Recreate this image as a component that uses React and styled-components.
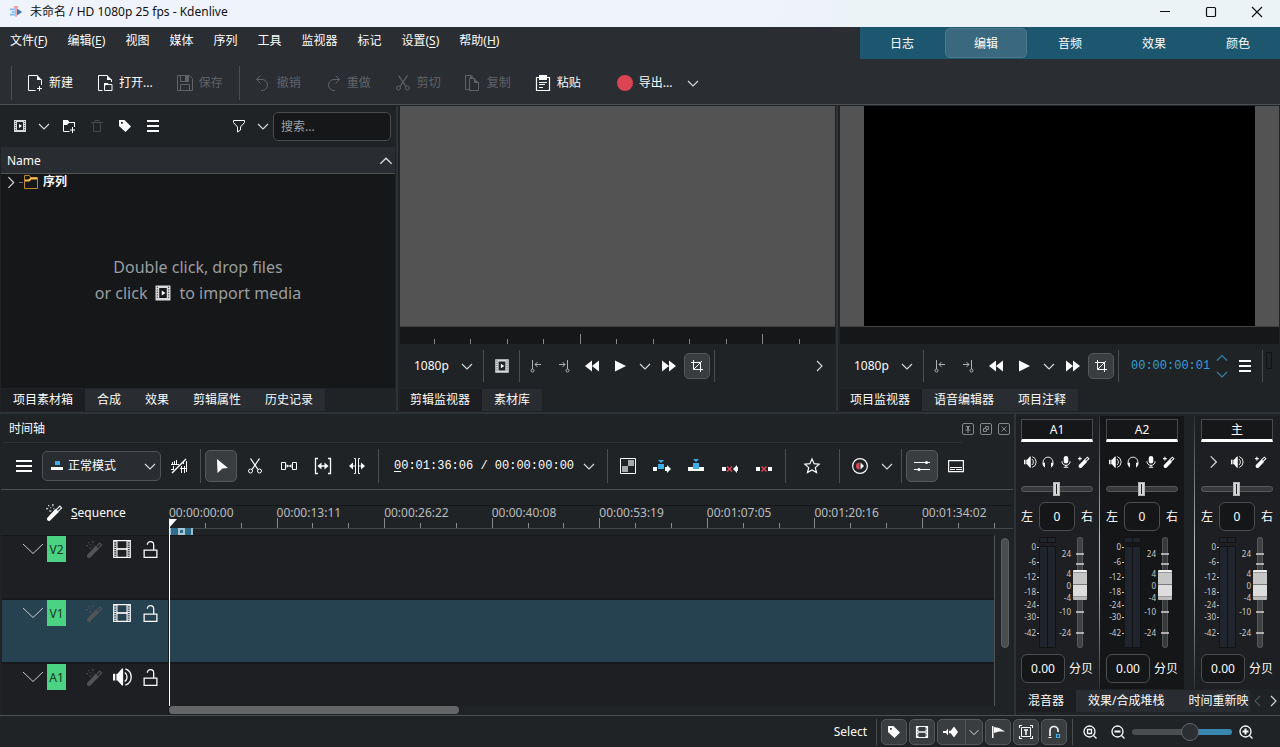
import styled, { createGlobalStyle, css } from "styled-components";

const GlobalStyle = createGlobalStyle`
  * { box-sizing: border-box; }
  body {
    margin: 0;
    background: #202326;
    color: #fcfcfc;
    font: 12px/16px "Noto Sans", "Noto Sans CJK SC", sans-serif;
  }
  button, input, select {
    font: inherit;
    color: inherit;
    border: none;
    background: none;
    padding: 0;
    margin: 0;
    outline: none;
  }
  svg { display: block; flex: none; }
`;

const line = { fill: "none", stroke: "currentColor" };
const solid = { fill: "currentColor" };
const thin = { fill: "none", stroke: "currentColor", strokeOpacity: 0.85, strokeWidth: 1.1 };

const shapes = {
  logo: (
    <>
      <path d="M1 5h6M3 8h4M1 11h6" stroke="#7fbcf2" strokeWidth="2" fill="none" />
      <path d="M9 4l6 4-6 4z" fill="#3f74ad" />
      <path d="M5.500 1h5v2L9 4.500v9H7v-9L5.500 3z" fill="#f0a3a0" />
    </>
  ),
  newDoc: (
    <>
      <path {...line} d="M8.500 15.500h-7V.5h9M14.500 4.500V10" />
      <path {...solid} d="M10 0l5 5h-5z" />
      <path {...line} d="M12.500 11v5M10 13.500h5" />
    </>
  ),
  openDoc: (
    <>
      <path {...line} d="M5.500 15.500h-4V.5h9M14.500 4.500V7" />
      <path {...solid} d="M10 0l5 5h-5z" />
      <path {...line} d="M7.500 15.500v-7h3l1 1h3.500v6z" />
      <path {...solid} d="M7 8h4l1 2H9l-2 2z" />
    </>
  ),
  save: (
    <>
      <path {...line} d="M.5.5h12l3 3v12H.5zM3.500.5v6h8v-6M3.500 15.500v-6h9v6" />
      <path {...solid} d="M8 1h3v5H8z" />
    </>
  ),
  undo: <path {...line} d="M5.500.5l-4 4 4 4M1.500 4.500H7a5.500 5.500 0 0 1 0 11H6" />,
  redo: <path {...line} d="M10.500.5l4 4-4 4M14.500 4.500H9a5.500 5.500 0 0 0 0 11h1" />,
  cut: (
    <>
      <path {...line} d="M3.500.5L11 11.500M12.500.5L5 11.500" strokeWidth="1.3" />
      <circle {...line} cx="3.500" cy="13" r="2" />
      <circle {...line} cx="12.500" cy="13" r="2" />
    </>
  ),
  copy: (
    <>
      <path {...line} d="M4.500 14.500h-4V.5h6l2 2" />
      <path {...line} d="M4.500 3.500h5M13.500 7v8.500h-9v-12" />
      <path {...solid} d="M9 3l5 5H9zM5 0l3 3H5z" />
    </>
  ),
  paste: (
    <>
      <path {...line} d="M1.500 2.500h13v13h-13z" strokeWidth="1.2" />
      <path {...solid} d="M4 0h8v5H4z" />
      <path {...line} d="M4 7.500h8M4 9.500h6M4 12.500h4" />
    </>
  ),
  record: <circle cx="8" cy="8" r="8" fill="#da4453" />,
  down: <path {...thin} d="M3 6l5 5 5-5" />,
  up: <path {...thin} d="M3 10.500l5-5 5 5" />,
  right: <path {...thin} d="M6 3l5 5-5 5" />,
  left: <path {...thin} d="M10 3L5 8l5 5" />,
  clip: (
    <>
      <path fill="#d8dadb" fillRule="evenodd" d="M2 2h12v12H2zM5 4v8h6V4z" />
      <path stroke="#55585b" strokeDasharray="1 1" d="M3.500 3v10M12.500 3v10" />
      <path {...solid} d="M7 6l3 2-3 2z" />
    </>
  ),
  addFolder: (
    <>
      <path {...line} d="M8.500 13.500h-6v-11h4l1.500 2h5.500V9" />
      <path {...solid} d="M2 2h5l1 2h6v1H8L6 7H2z" />
      <path {...line} d="M11.500 9v6M9 12h5" />
    </>
  ),
  trash: <path {...line} d="M2 4.500h12M6 4V2.500h4V4M4.500 5v8.500h7V5" />,
  tag: <path {...solid} fillRule="evenodd" d="M2 2h5.500L14 8.500 8.500 14 2 8zM4 4v1.800h1.800V4z" />,
  menu: <path {...line} d="M2 3h12M2 8h12M2 13h12" strokeWidth="2" />,
  bigMenu: <path {...line} d="M0 3h16M0 8h16M0 13h16" strokeWidth="2" />,
  filter: <path {...line} d="M2.500 2.500h11v2L9.500 9v3l-3 2V9l-4-4.500z" />,
  folder: (
    <g fill="none" stroke="#c08429">
      <path d="M1.500 1.500h5l1 2h7v11h-13z" />
      <path d="M2 6.500h4l2-2h6" stroke="#fdbc4b" strokeWidth="2" />
    </g>
  ),
  markIn: (
    <g {...line}>
      <path d="M4.500 2v9M7 6.500h6M9.500 4L7 6.500 9.500 9" />
      <circle cx="4.500" cy="12.500" r="1.500" />
    </g>
  ),
  markOut: (
    <g {...line}>
      <path d="M11.500 2v9M3 6.500h6M6.500 4L9 6.500 6.500 9" />
      <circle cx="11.500" cy="12.500" r="1.500" />
    </g>
  ),
  rewind: <path {...solid} d="M8 2.500v11L1 8zM15 2.500v11L8 8z" />,
  forward: <path {...solid} d="M8 2.500v11L15 8zM1 2.500v11L8 8z" />,
  play: <path {...solid} d="M3 2.500l11 5.500-11 5.500z" />,
  crop: <path {...line} d="M4.500 2v9.500H14M2 4.500h9.500V14M4.500 11.500L13 3" />,
  pin: (
    <g {...line}>
      <rect x="2.500" y="2.500" width="11" height="11" rx="1.500" />
      <path d="M6 5.500h4M5.500 9h5M8 9v3" />
      <path d="M8 5v4" strokeWidth="2" />
    </g>
  ),
  float: (
    <g {...line}>
      <rect x="2.500" y="2.500" width="11" height="11" rx="1.500" />
      <path d="M5.500 7.500h3v3h-3zM7.500 7V5.500h3v3H9" />
    </g>
  ),
  closeDock: (
    <g {...line}>
      <rect x="2.500" y="2.500" width="11" height="11" rx="1.500" />
      <path d="M5.500 5.500l5 5M10.500 5.500l-5 5" />
    </g>
  ),
  normalMode: (
    <>
      <path {...solid} d="M2 9h12v3H2z" />
      <path fill="#3daee9" d="M6 3h5v4H6z" />
    </>
  ),
  waves: (
    <g {...line}>
      <path d="M0 6.500h8M1.500 4v2M3.500 3v3M5.500 2v4M0 11.500h2M9 10.500h6M10.500 8v7M13.500 8v7" />
      <path d="M1 15L15 1" strokeWidth="1.500" />
      <path d="M2.500 8v4M12.500 3v3M15.500 3v11" />
    </g>
  ),
  pointer: <path {...solid} d="M4 1l11 9-5.500.5L4.500 15z" />,
  spacer: (
    <g {...line}>
      <path d="M.5 4.500h4v7h-4zM11.500 4.500h4v7h-4zM6 8h4" />
      <path {...solid} stroke="none" d="M5.500 6v4l2-2zM10.500 6v4l-2-2z" />
    </g>
  ),
  slip: (
    <g {...line}>
      <path d="M3 .5H.5v15H3M13 .5h2.500v15H13M4 8h8" strokeWidth="1.300" />
      <path {...solid} stroke="none" d="M6.500 4.500v7L2.500 8zM9.500 4.500v7l4-3.500z" />
    </g>
  ),
  slide: (
    <g {...line}>
      <path d="M5 .5h1.500v15H5M11 .5H9.500v15H11M2 8h4M10 8h4" />
      <path {...solid} stroke="none" d="M4 4.500v7L0 8zM12 4.500v7L16 8z" />
    </g>
  ),
  composite: (
    <>
      <path {...line} d="M.5.5h15v15H.5z" />
      <path fill="#a5a8aa" d="M8 2h6v6H8zM2 8h6v6H2z" />
    </>
  ),
  insert: (
    <>
      <path {...solid} d="M-1 9h4v4h-4zM11 9h2V7l4 4-4 4v-2h-2z" />
      <path fill="#3daee9" d="M4 6h6v5H4zM4 2h6L7 5z" />
    </>
  ),
  overwrite: (
    <>
      <path {...solid} d="M0 9h16v4H0z" />
      <path fill="#3daee9" d="M5 5h6v6H5zM5 1h6L8 4z" />
    </>
  ),
  extract: (
    <>
      <path {...solid} d="M0 9h4v4H0zM16 9h-1V7l-4 4 4 4v-2h1z" />
      <path stroke="#da4453" strokeWidth="1.500" d="M5 8.500l5 5M10 8.500l-5 5" />
    </>
  ),
  lift: (
    <>
      <path {...solid} d="M0 9h4v4H0zM12 9h4v4h-4z" />
      <path stroke="#da4453" strokeWidth="1.500" d="M5.500 8.500l5 5M10.500 8.500l-5 5" />
    </>
  ),
  star: <path {...line} d="M8 1l2.100 4.700 5 .5-3.800 3.400 1.200 5L8 12l-4.500 2.600 1.200-5L.9 6.200l5-.5z" strokeWidth="1.2" />,
  preview: (
    <>
      <circle {...line} cx="8" cy="8" r="7.400" strokeWidth="1.2" />
      <path fill="#da4453" d="M7.500 4.500v7a3.500 3.500 0 0 1 0-7z" />
      <path {...solid} d="M8.500 4.500v7l3.500-3.500z" />
    </>
  ),
  sliders: (
    <>
      <path {...line} d="M0 4.500h16M0 11.500h16" strokeWidth="1.2" />
      <circle {...solid} cx="12.500" cy="4.500" r="1.600" />
      <circle {...solid} cx="5" cy="11.500" r="1.600" />
    </>
  ),
  subtitle: (
    <g {...line}>
      <path d="M.6 2.600h14.800v11H.6z" strokeWidth="1.2" />
      <path d="M2 9.500h12M2 11.500h5M8 11.500h6" />
    </g>
  ),
  wand: (
    <>
      <path {...line} d="M9.500 5.500l3.500-3.500 1.700 1.700-3.500 3.500z" />
      <path {...solid} d="M8.800 4.700l3 3L4 15.500a1.500 1.500 0 0 1-2.500-2.800z" />
      <path {...solid} d="M2 1h1v1H2zM6 0h1v2H6zM0 4h2v1H0zM4 3h1v1H4zM3 6h2v1H3zM7 4h1v1H7z" />
    </>
  ),
  smallWand: (
    <>
      <path {...line} d="M8.500 5.500l4-4 2 2-4 4z" strokeWidth="1.400" />
      <path {...solid} d="M8.500 4.500l3.500 3.500L5 15.200a2 2 0 0 1-3.500-3.500z" />
      <path {...line} d="M0 3.500h5M2.500 1v5" strokeWidth="1.400" />
    </>
  ),
  film: (
    <>
      <path {...line} d="M.6.6h14.800v14.800H.6zM3.500 1v14M12.500 1v14" />
      <path {...line} d="M3 8h10" strokeWidth="1.500" />
      <path stroke="currentColor" strokeWidth="2" strokeDasharray="1 1" d="M2 1v14M14 1v14" />
    </>
  ),
  lock: <path {...line} d="M2 8.500h12v7H2zM5 3.500a3 3 0 0 1 6 0V8" strokeWidth="1.2" />,
  speaker: (
    <>
      <path {...solid} d="M0 5h2v6H0zM3 5h1l4-4.500h1v15H8L4 11H3z" />
      <path {...line} d="M10.500 4a5 5 0 0 1 0 8M11 .8a7.600 7.600 0 0 1 0 14.400" strokeWidth="1.2" />
    </>
  ),
  phones: (
    <>
      <path {...line} d="M1.500 11V8a6.500 6.500 0 0 1 13 0v3" strokeWidth="1.2" />
      <path {...solid} d="M1 9h3v6H3L1 12zM15 9h-3v6h1l2-3z" />
    </>
  ),
  mic: (
    <>
      <rect {...solid} x="5" y="0" width="6" height="10" rx="3" />
      <path {...line} d="M2.500 7a5.500 5.500 0 0 0 11 0M8 12v3M5 15h6" strokeWidth="1.3" />
    </>
  ),
  flag: <path {...solid} d="M2 2h1.500v12H2zM4 3l5 1 6 3.500H9L4 9z" />,
  strip: (
    <>
      <path {...line} d="M2.500 2.500h11v11h-11z" strokeWidth="1.2" />
      <path stroke="currentColor" strokeWidth="2" strokeDasharray="2 1" d="M3.500 2.500v11M12.500 2.500v11" />
      <path {...line} d="M4 8h8" strokeWidth="1.500" />
    </>
  ),
  audio: <path {...solid} d="M0 7h3l2-2.500v7L3 9H0zM6 6.500L7.500 7 11 2.500 15 8l-4 5.500L7.500 9 6 9.500z" />,
  zone: (
    <g {...line}>
      <path d="M3.500 3.500h9v9h-9zM1.500 1v3M1 1.500h3M14.500 1v3M15 1.500h-3M1.500 15v-3M1 14.500h3M14.500 15v-3M15 14.500h-3" />
      <path d="M6 6h4M8 6v5" strokeWidth="1.500" />
    </g>
  ),
  magnet: (
    <>
      <path {...line} d="M4 12V6.500a4 4 0 0 1 8 0V8" strokeWidth="1.600" />
      <path {...line} d="M2.500 13.500h3" />
      <path fill="none" stroke="#3daee9" strokeWidth="1.200" d="M10.500 10.500h3v3h-3z" />
    </>
  ),
  zoomFit: (
    <g {...line} strokeWidth="1.300">
      <circle cx="7.500" cy="7.500" r="5.500" />
      <path d="M11.500 11.500l3 3M5.500 5.500h4v4h-4z" />
    </g>
  ),
  zoomOut: (
    <g {...line} strokeWidth="1.300">
      <circle cx="7.500" cy="7.500" r="5.500" />
      <path d="M11.500 11.500l3 3" />
      <path d="M4.500 7.500h6" strokeWidth="2" />
    </g>
  ),
  zoomIn: (
    <g {...line} strokeWidth="1.300">
      <circle cx="7.500" cy="7.500" r="5.500" />
      <path d="M11.500 11.500l3 3" />
      <path d="M4.500 7.500h6M7.500 4.500v6" strokeWidth="2" />
    </g>
  ),
  minimize: <path {...line} d="M3 7.500h10" />,
  maximize: <rect {...line} x="3.500" y="3.500" width="9" height="9" rx="1" strokeWidth="1.200" />,
  close: <path {...line} d="M3 3l10 10M13 3L3 13" strokeWidth="1.200" />,
};

function Icon({ name, size = 16 }) {
  return (
    <svg width={size} height={size} viewBox="0 0 16 16" aria-hidden="true" overflow="visible">
      {shapes[name]}
    </svg>
  );
}

export default function App() {
  return (
    <Window>
      <GlobalStyle />
      <TitleBar>
        <Icon name="logo" size={14} />
        <Title>未命名 / HD 1080p 25 fps - Kdenlive</Title>
        {["minimize", "maximize", "close"].map((n) => (
          <WindowButton key={n} aria-label={n}>
            <Icon name={n} />
          </WindowButton>
        ))}
      </TitleBar>
      <Header />
      <Docks>
        <ProjectBin />
        <ClipMonitor />
        <ProjectMonitor />
      </Docks>
      <Lower>
        <Timeline />
        <Mixer />
      </Lower>
      <StatusBar />
    </Window>
  );
}

function Header() {
  const menus = [["文件", "F"], ["编辑", "E"], ["视图"], ["媒体"], ["序列"], ["工具"], ["监视器"], ["标记"], ["设置", "S"], ["帮助", "H"]];
  return (
    <HeaderBox>
      <MenuRow>
        <Menus>
          {menus.map(([label, key]) => (
            <MenuItem key={label}>
              {label}
              {key && <>(<u>{key}</u>)</>}
            </MenuItem>
          ))}
        </Menus>
        <Layouts>
          {["日志", "编辑", "音频", "效果", "颜色"].map((l) => (
            <LayoutButton key={l} $active={l === "编辑"}>{l}</LayoutButton>
          ))}
        </Layouts>
      </MenuRow>
      <MainTools>
        <Sep />
        <TextTool icon="newDoc">新建</TextTool>
        <TextTool icon="openDoc">打开...</TextTool>
        <TextTool icon="save" disabled>保存</TextTool>
        <Sep />
        <TextTool icon="undo" disabled>撤销</TextTool>
        <TextTool icon="redo" disabled>重做</TextTool>
        <TextTool icon="cut" disabled>剪切</TextTool>
        <TextTool icon="copy" disabled>复制</TextTool>
        <TextTool icon="paste">粘贴</TextTool>
        <ExportGroup>
          <TextTool icon="record">导出...</TextTool>
          <Tool icon="down" w={18} />
        </ExportGroup>
      </MainTools>
    </HeaderBox>
  );
}

function TextTool({ icon, disabled, children }) {
  return (
    <TextButton disabled={disabled}>
      <Icon name={icon} />
      {children}
    </TextButton>
  );
}

function Tool({ icon, w, size, ...rest }) {
  return (
    <Slot $w={w} aria-label={icon} {...rest}>
      <Icon name={icon} size={size} />
    </Slot>
  );
}

function Tabs({ items, flush }) {
  return (
    <TabRow $flush={flush}>
      {items.map((t, i) => (
        <Tab key={t} $active={i === 0}>{t}</Tab>
      ))}
    </TabRow>
  );
}

function ProjectBin() {
  return (
    <BinDock>
      <BinTools>
        <Tool icon="clip" w={26} />
        <Tool icon="down" w={22} />
        <Tool icon="addFolder" w={28} />
        <Tool icon="trash" w={28} disabled />
        <Tool icon="tag" w={28} />
        <Tool icon="menu" w={28} />
        <Grow />
        <Tool icon="filter" w={28} />
        <Tool icon="down" w={20} />
        <Search type="search" placeholder="搜索..." aria-label="搜索" />
      </BinTools>
      <BinHeader>
        Name
        <Icon name="up" size={18} />
      </BinHeader>
      <BinList>
        <TreeRow>
          <Icon name="right" size={17} />
          <Dash />
          <Icon name="folder" />
          <b>序列</b>
        </TreeRow>
        <Hint>
          <span>Double click, drop files</span>
          <span>or click <Icon name="clip" size={20} /> to import media</span>
        </Hint>
      </BinList>
      <Tabs items={["项目素材箱", "合成", "效果", "剪辑属性", "历史记录"]} />
    </BinDock>
  );
}

function MonitorTools({ clip, children }) {
  return (
    <MonitorBar>
      <Quality>
        <select aria-label="quality" defaultValue="1080p">
          <option>1080p</option>
        </select>
        <Icon name="down" />
      </Quality>
      <MonitorSep />
      {clip && (
        <>
          <Tool icon="clip" w={31} size={18} />
          <MonitorSep />
        </>
      )}
      <DimTool icon="markIn" w={28} />
      <DimTool icon="markOut" w={28} />
      <Tool icon="rewind" w={28} />
      <Tool icon="play" w={28} />
      <Tool icon="down" w={22} />
      <Tool icon="forward" w={26} />
      <MonitorToggle $w={26} aria-label="crop">
        <Icon name="crop" />
      </MonitorToggle>
      <MonitorSep />
      {children}
    </MonitorBar>
  );
}

function ClipMonitor() {
  return (
    <MonitorDock>
      <Video />
      <ClipRuler>
        {Array.from({ length: 11 }, (_, i) => (
          <Tick key={i} $major={i === 4 || i === 9} />
        ))}
      </ClipRuler>
      <MonitorTools clip>
        <Grow />
        <Tool icon="right" w={32} />
      </MonitorTools>
      <Tabs items={["剪辑监视器", "素材库"]} flush />
    </MonitorDock>
  );
}

function ProjectMonitor() {
  return (
    <MonitorDock $last>
      <Video>
        <Frame />
      </Video>
      <ClipRuler />
      <MonitorTools>
        <Position aria-label="position" defaultValue="00:00:00:01" />
        <Spin>
          <Icon name="up" />
          <Icon name="down" />
        </Spin>
        <Tool icon="menu" w={30} />
        <MonitorSep />
        <MiniMeter />
      </MonitorTools>
      <Tabs items={["项目监视器", "语音编辑器", "项目注释"]} flush />
    </MonitorDock>
  );
}

const times = ["00:00:00:00", "00:00:13:11", "00:00:26:22", "00:00:40:08", "00:00:53:19", "00:01:07:05", "00:01:20:16", "00:01:34:02"];
const tracks = [
  { id: "V2", icon: "film" },
  { id: "V1", icon: "film", active: true },
  { id: "A1", icon: "speaker" },
];

function Timeline() {
  return (
    <TimelineDock>
      <DockTitle>
        时间轴
        <Grow />
        <DockButton aria-label="pin"><Icon name="pin" /></DockButton>
        <DockButton aria-label="float"><Icon name="float" /></DockButton>
        <DockButton aria-label="close"><Icon name="closeDock" /></DockButton>
      </DockTitle>
      <TitleRule />
      <TimelineTools>
        <Tool icon="bigMenu" />
        <ModeBox>
          <Icon name="normalMode" />
          <select aria-label="mode" defaultValue="正常模式">
            <option>正常模式</option>
          </select>
          <Icon name="down" />
        </ModeBox>
        <Tool icon="waves" />
        <Sep />
        <Toggle $w={32} aria-label="pointer"><Icon name="pointer" /></Toggle>
        <Tool icon="cut" />
        <Tool icon="spacer" />
        <Tool icon="slip" />
        <Tool icon="slide" />
        <Sep />
        <TimeButton>
          <span><u>0</u>0:01:36:06 / 00:00:00:00</span>
          <Icon name="down" />
        </TimeButton>
        <Sep />
        <Tool icon="composite" />
        <Tool icon="insert" />
        <Tool icon="overwrite" />
        <Tool icon="extract" />
        <Tool icon="lift" />
        <Sep />
        <Tool icon="star" w={46} />
        <Sep />
        <Tool icon="preview" />
        <Tool icon="down" w={20} />
        <Sep />
        <Toggle $w={32} aria-label="mixer"><Icon name="sliders" /></Toggle>
        <Tool icon="subtitle" />
      </TimelineTools>
      <TimelineBody>
        <Heads>
          <SequenceRow>
            <Icon name="wand" size={17} />
            <span><u>S</u>equence</span>
          </SequenceRow>
          {tracks.map((t) => (
            <TrackHead key={t.id} $active={t.active}>
              <svg width="20" height="10" viewBox="0 0 20 10" fill="none" stroke="#c8cacb" aria-hidden="true">
                <path d="M0 0l10 9.500L20 0" />
              </svg>
              <Badge>{t.id}</Badge>
              <HeadButton aria-label="effects" disabled><Icon name="wand" size={17} /></HeadButton>
              <HeadButton aria-label={t.icon}><Icon name={t.icon} size={18} /></HeadButton>
              <HeadButton aria-label="lock"><Icon name="lock" size={17} /></HeadButton>
            </TrackHead>
          ))}
        </Heads>
        <TrackArea>
          <Labels>
            {times.map((t) => <span key={t}>{t}</span>)}
          </Labels>
          <Ticks>
            {Array.from({ length: 24 }, (_, i) => (
              <Tick key={i} $major={i % 3 === 0} />
            ))}
          </Ticks>
          <ZoneRow>
            <Zone><i /></Zone>
          </ZoneRow>
          <LaneRow>
            <Lanes>
              {tracks.map((t) => <Lane key={t.id} $active={t.active} />)}
            </Lanes>
            <ScrollRail><ScrollThumb /></ScrollRail>
          </LaneRow>
          <HorizontalThumb />
          <Playhead />
        </TrackArea>
      </TimelineBody>
    </TimelineDock>
  );
}

const levels = [["0", 12], ["-6", 27], ["-12", 42], ["-18", 57], ["-24", 70], ["-30", 82], ["-42", 98]];
const gains = [["24", 19], ["4", 39], ["0", 51], ["-4", 63], ["-10", 77], ["-24", 98]];

function Meter() {
  return (
    <svg width="52" height="114" viewBox="0 0 52 114" aria-hidden="true">
      <g fill="#20242c" stroke="#111315">
        <path d="M18.500 2.500h8v5h-8zM26.500 2.500h8v5h-8zM18.500 11.500h8v101h-8zM26.500 11.500h8v101h-8z" />
      </g>
      <g fill="#c9cbcc" fontSize="8" textAnchor="end">
        {levels.map(([l, y]) => (
          <g key={l}>
            <text x="15" y={y + 3}>{l}</text>
            <path d={`M16 ${y}h2v1h-2z`} />
          </g>
        ))}
        {gains.map(([l, y]) => (
          <text key={l} x="50" y={y + 3}>{l}</text>
        ))}
      </g>
    </svg>
  );
}

function Strip({ name, variant, icons }) {
  return (
    <StripBox $variant={variant}>
      <StripName>{name}</StripName>
      <StripIcons>
        {icons.map((n) => (
          <button key={n} aria-label={n}><Icon name={n} size={n === "right" ? 18 : 12} /></button>
        ))}
      </StripIcons>
      <Balance type="range" min="-50" max="50" defaultValue="-1" aria-label={`${name} balance`} />
      <StripRow>
        左
        <NumberBox $w={36} defaultValue="0" aria-label={`${name} balance value`} />
        右
      </StripRow>
      <MeterRow>
        <Meter />
        <Fader type="range" min="0" max="100" defaultValue="59" aria-label={`${name} volume`} />
      </MeterRow>
      <StripRow>
        <NumberBox $w={44} defaultValue="0.00" aria-label={`${name} gain`} />
        分贝
      </StripRow>
    </StripBox>
  );
}

function Mixer() {
  return (
    <MixerDock>
      <Strips>
        <Strip name="A1" icons={["speaker", "phones", "mic", "smallWand"]} />
        <StripLine />
        <Strip name="A2" variant="dark" icons={["speaker", "phones", "mic", "smallWand"]} />
        <Grow />
        <StripLine />
        <Strip name="主" variant="main" icons={["right", "speaker", "smallWand"]} />
      </Strips>
      <MixerTabs>
        <Tabs items={["混音器", "效果/合成堆栈", "时间重新映"]} />
        <TabScroll disabled aria-label="left"><Icon name="left" /></TabScroll>
        <TabScroll aria-label="right"><Icon name="right" /></TabScroll>
      </MixerTabs>
    </MixerDock>
  );
}

function StatusBar() {
  return (
    <Status>
      <Mode>Select</Mode>
      <StatusSep />
      <Toggle $w={26} aria-label="tag"><Icon name="tag" /></Toggle>
      <Toggle $w={26} aria-label="video thumbnails"><Icon name="strip" /></Toggle>
      <SplitButton>
        <button aria-label="audio thumbnails"><Icon name="audio" /></button>
        <button aria-label="audio options"><Icon name="down" size={14} /></button>
      </SplitButton>
      <Toggle $w={26} aria-label="markers"><Icon name="flag" /></Toggle>
      <Toggle $w={26} aria-label="zones"><Icon name="zone" /></Toggle>
      <Toggle $w={26} aria-label="snap"><Icon name="magnet" /></Toggle>
      <StatusSep />
      <Tool icon="zoomFit" w={28} />
      <Tool icon="zoomOut" w={28} />
      <Zoom type="range" min="0" max="100" defaultValue="60" aria-label="zoom" />
      <Tool icon="zoomIn" w={28} />
    </Status>
  );
}

const Window = styled.div`
  min-height: 100vh;
  display: flex;
  flex-direction: column;
`;

const TitleBar = styled.header`
  height: 27px;
  display: flex;
  align-items: center;
  padding: 0 0 3px 9px;
  background: linear-gradient(100deg, #eef3fc 60%, #ecf3f7 66%);
  color: #111;
`;

const Title = styled.span`
  flex: 1;
  padding-left: 7px;
`;

const WindowButton = styled.button`
  width: 46px;
  display: flex;
  justify-content: center;
`;

const HeaderBox = styled.div`
  background: #2a2d32;
  border-bottom: 1px solid #4d5053;
`;

const MenuRow = styled.div`
  display: flex;
  height: 32px;
`;

const Menus = styled.nav`
  flex: 1;
  display: flex;
  align-items: flex-start;
`;

const MenuItem = styled.button`
  height: 28px;
  padding: 0 10px;
  white-space: nowrap;
  u { text-underline-offset: 2px; }
`;

const Layouts = styled.div`
  display: flex;
  background: #1d566f;
`;

const LayoutButton = styled.button`
  width: 82px;
  margin: 1px;
  padding-top: 2px;
  border: 1px solid transparent;
  border-radius: 5px;
  ${(p) => p.$active && css`
    background: #3a687f;
    border-color: #4c7a8f;
  `}
`;

const MainTools = styled.div`
  height: 45px;
  display: flex;
  align-items: center;
  padding: 2px 0 0 7px;
`;

const ExportGroup = styled.div`
  display: flex;
  margin-left: 12px;
`;

const TextButton = styled.button`
  display: flex;
  align-items: center;
  gap: 6px;
  padding: 0 12px;
  white-space: nowrap;
  &:disabled { color: #606366; }
`;

const Sep = styled.i`
  flex: none;
  width: 1px;
  height: 34px;
  margin: 0 3px 0 4px;
  background: #4b4e51;
`;

const Slot = styled.button`
  flex: none;
  width: ${(p) => p.$w || 34}px;
  height: 32px;
  display: flex;
  align-items: center;
  justify-content: center;
  &:disabled { color: #46494c; }
`;

const DimTool = styled(Tool)`
  color: #b0b2b4;
`;

const Toggle = styled.button`
  flex: none;
  width: ${(p) => p.$w}px;
  height: ${(p) => p.$w}px;
  margin: 0 1px;
  display: flex;
  align-items: center;
  justify-content: center;
  background: #3a3d40;
  border: 1px solid #55585b;
  border-radius: 5px;
`;

const MonitorToggle = styled(Toggle)`
  margin: 0 2px;
`;

const Grow = styled.div`
  flex: 1;
`;

const Docks = styled.main`
  display: grid;
  grid-template-columns: 398fr 440fr 442fr;
  height: 309px;
  padding: 1px 0;
  border-bottom: 2px solid #2e3338;
`;

const BinDock = styled.section`
  display: flex;
  flex-direction: column;
  min-width: 0;
  padding: 0 1px;
  border-right: 2px solid #2e3338;
`;

const BinTools = styled.div`
  height: 41px;
  display: flex;
  align-items: center;
  padding: 0 4px 1px 6px;
`;

const Search = styled.input`
  width: 118px;
  height: 29px;
  padding: 0 7px;
  background: #151718;
  border: 1px solid #4b4e51;
  border-radius: 5px;
  &::placeholder { color: #9ea2a4; }
`;

const BinHeader = styled.div`
  height: 27px;
  display: flex;
  align-items: center;
  justify-content: space-between;
  padding: 1px 0 0 6px;
  background: #292c31;
  border-bottom: 1px solid #505356;
`;

const BinList = styled.div`
  flex: 1;
  display: flex;
  flex-direction: column;
  background: #151718;
`;

const TreeRow = styled.div`
  height: 18px;
  display: flex;
  align-items: center;
  padding: 0 0 2px 1px;
  b { padding-left: 4px; line-height: 16px; }
`;

const Dash = styled.i`
  width: 4px;
  height: 1px;
  background: #6d7073;
`;

const Hint = styled.div`
  flex: 1;
  display: flex;
  flex-direction: column;
  align-items: center;
  justify-content: center;
  padding-bottom: 20px;
  font-size: 16px;
  line-height: 26px;
  color: #9a9ea1;
  span { display: flex; align-items: center; gap: 6px; white-space: nowrap; }
  svg { color: #fcfcfc; }
`;

const TabRow = styled.div`
  flex: none;
  display: flex;
  height: 23px;
  padding-top: 1px;
  overflow: hidden;
  button:first-child { padding-left: ${(p) => (p.$flush ? 10 : 12)}px; }
`;

const Tab = styled.button`
  flex: none;
  padding: 0 12px;
  background: ${(p) => (p.$active ? "#1d1e21" : "#292c31")};
`;

const MonitorDock = styled.section`
  display: flex;
  flex-direction: column;
  min-width: 0;
  padding: 0 1px 0 2px;
  border-right: ${(p) => (p.$last ? "none" : "2px solid #2e3338")};
`;

const Video = styled.div`
  flex: 1;
  min-height: 0;
  display: flex;
  justify-content: center;
  background: #535353;
  border-bottom: 1px solid #404346;
`;

const Frame = styled.div`
  aspect-ratio: 16 / 9;
  background: #000;
`;

const ClipRuler = styled.div`
  height: 17px;
  display: grid;
  grid-template-columns: 34px repeat(11, 1fr);
  align-items: end;
  background: #151718;
  &::before { content: ""; }
`;

const Tick = styled.i`
  height: ${(p) => (p.$major ? 10 : 5)}px;
  border-left: 1px solid #85888a;
`;

const MonitorBar = styled.div`
  height: 44px;
  display: flex;
  align-items: center;
`;

const MonitorSep = styled(Sep)`
  height: 32px;
  margin: 0 2px;
`;

const Quality = styled.label`
  width: 81px;
  display: flex;
  align-items: center;
  padding: 0 6px 0 14px;
  select { flex: 1; appearance: none; }
`;

const Position = styled.input`
  width: 93px;
  padding-left: 10px;
  font-family: "Liberation Mono", monospace;
  color: #349fd6;
`;

const Spin = styled.div`
  flex: none;
  width: 16px;
  color: #3594c8;
`;

const MiniMeter = styled.div`
  width: 6px;
  height: 17px;
  margin: 0 0 12px 1px;
  border: 1px solid #111315;
`;

const Lower = styled.div`
  flex: 1;
  display: flex;
`;

const TimelineDock = styled.section`
  flex: 1;
  min-width: 0;
  display: flex;
  flex-direction: column;
  padding: 0 1px;
  border-right: 2px solid #2e3338;
`;

const DockTitle = styled.div`
  height: 28px;
  display: flex;
  align-items: center;
  padding: 1px 0 0 8px;
`;

const DockButton = styled.button`
  width: 18px;
  display: flex;
  justify-content: center;
  color: #85888a;
`;

const TitleRule = styled.div`
  height: 1px;
  margin: 0 51px 0 2px;
  background: #2c3034;
`;

const TimelineTools = styled.div`
  height: 47px;
  display: flex;
  align-items: center;
  padding-left: 6px;
  border-bottom: 1px solid #4d5053;
`;

const ModeBox = styled.label`
  width: 119px;
  height: 30px;
  margin: 0 1px;
  padding: 0 2px 0 6px;
  display: flex;
  align-items: center;
  gap: 3px;
  background: #292c31;
  border: 1px solid #505356;
  border-radius: 5px;
  select { flex: 1; appearance: none; }
`;

const TimeButton = styled.button`
  width: 221px;
  display: flex;
  align-items: center;
  justify-content: space-between;
  padding: 0 6px 0 12px;
  font-family: "Liberation Mono", monospace;
  white-space: nowrap;
  u { text-underline-offset: 2px; }
`;

const TimelineBody = styled.div`
  flex: 1;
  display: flex;
`;

const Heads = styled.div`
  width: 168px;
  display: flex;
  flex-direction: column;
`;

const SequenceRow = styled.div`
  height: 46px;
  display: flex;
  align-items: center;
  gap: 8px;
  padding-left: 45px;
  border-bottom: 1px solid #151718;
`;

const trackColors = css`
  background: ${(p) => (p.$active ? "#264150" : "#1e1f22")};
`;

const TrackHead = styled.div`
  ${trackColors}
  height: 64px;
  display: flex;
  align-items: flex-start;
  padding-left: 21px;
  margin-left: 1px;
  border-bottom: 2px solid #16181a;
  border-right: 1px solid #16181a;
  &:last-child { flex: 1; height: auto; border-bottom: none; }
  > svg { margin-top: 8px; }
`;

const Badge = styled.span`
  width: 19px;
  margin: 0 14px 0 4px;
  padding-top: 2px;
  line-height: 24px;
  text-align: center;
  background: #4cd283;
  color: #143a24;
`;

const HeadButton = styled.button`
  width: 28px;
  height: 26px;
  display: flex;
  align-items: center;
  justify-content: center;
  &:disabled { color: #515457; }
`;

const TrackArea = styled.div`
  position: relative;
  flex: 1;
  min-width: 0;
  display: flex;
  flex-direction: column;
`;

const Labels = styled.div`
  display: grid;
  grid-template-columns: repeat(7, 13fr) 11fr;
  height: 13px;
  margin-top: 15px;
  border-top: 1px solid #151718;
  line-height: 14px;
  color: #b9bcbe;
  white-space: nowrap;
  span { min-width: 0; }
`;

const Ticks = styled.div`
  display: grid;
  grid-template-columns: repeat(23, 13fr) 7fr;
  align-items: end;
  height: 10px;
`;

const ZoneRow = styled.div`
  height: 7px;
  border-top: 1px solid #45484b;
`;

const Zone = styled.div`
  width: 24px;
  height: 7px;
  margin-top: -1px;
  display: flex;
  justify-content: center;
  align-items: center;
  background: #2f6d8f;
  border-right: 2px solid #9dbccb;
  border-left: 2px solid #9dbccb;
  i { width: 7px; height: 7px; border: 2px solid #a9c6d4; }
`;

const LaneRow = styled.div`
  flex: 1;
  display: flex;
`;

const Lanes = styled.div`
  flex: 1;
  display: flex;
  flex-direction: column;
  border-top: 1px solid #151718;
  border-right: 1px solid #505356;
`;

const Lane = styled.div`
  ${trackColors}
  height: 64px;
  border-bottom: 2px solid #16181a;
  &:last-child { flex: 1; height: auto; border-bottom: none; }
`;

const ScrollRail = styled.div`
  width: 18px;
  padding: 3px 4px 0 6px;
`;

const ScrollThumb = styled.div`
  height: 110px;
  background: #4a4d4f;
  border: 1px solid #5d6062;
  border-radius: 4px;
`;

const HorizontalThumb = styled.div`
  width: 290px;
  height: 8px;
  margin-bottom: 1px;
  background: #646566;
  border-radius: 4px;
`;

const Playhead = styled.div`
  position: absolute;
  top: 29px;
  bottom: 9px;
  left: 0;
  width: 1px;
  background: #fff;
  &::before {
    content: "";
    position: absolute;
    border-top: 9px solid #fff;
    border-right: 8px solid transparent;
  }
`;

const MixerDock = styled.section`
  width: 264px;
  display: flex;
  flex-direction: column;
  padding-top: 2px;
`;

const Strips = styled.div`
  flex: 1;
  display: flex;
`;

const StripLine = styled.i`
  width: 1px;
  background: linear-gradient(#303336, #b5b7b8 45%, #b5b7b8 60%, #303336);
`;

const StripBox = styled.div`
  width: ${(p) => (p.$variant === "main" ? 85 : p.$variant ? 84 : 83)}px;
  padding: 3px 6px 5px ${(p) => (p.$variant ? 6 : 5)}px;
  background: ${(p) => (p.$variant === "dark" ? "#141618" : "#1e1f22")};
`;

const StripName = styled.button`
  display: block;
  width: 72px;
  height: 23px;
  background: #151719;
  border: 1px solid #484c51;
  border-bottom: 3px solid #fff;
`;

const StripIcons = styled.div`
  width: 72px;
  height: 22px;
  margin: 9px 0;
  display: flex;
  button {
    flex: 1;
    display: flex;
    align-items: center;
    justify-content: center;
  }
`;

const Balance = styled.input`
  display: block;
  width: 72px;
  height: 14px;
  appearance: none;
  &::-webkit-slider-runnable-track {
    height: 6px;
    background: #38393b;
    border: 1px solid #55575a;
    border-radius: 3px;
  }
  &::-webkit-slider-thumb {
    appearance: none;
    width: 7px;
    height: 14px;
    margin-top: -5px;
    background: linear-gradient(#222, #222) center / 1px 10px no-repeat #d6d6d6;
    border: 1px solid #b5b5b5;
  }
`;

const StripRow = styled.div`
  width: 72px;
  display: flex;
  align-items: center;
  justify-content: space-between;
  margin: 6px 0 0;
`;

const NumberBox = styled.input`
  width: ${(p) => p.$w}px;
  height: 29px;
  text-align: center;
  background: #141618;
  border: 1px solid #4b4e51;
  border-radius: 6px;
`;

const MeterRow = styled.div`
  height: 114px;
  margin: 4px 0 -1px;
  display: flex;
`;

const Fader = styled.input`
  width: 14px;
  height: 111px;
  margin: 2px 0 0;
  writing-mode: vertical-lr;
  direction: rtl;
  appearance: none;
  background:
    linear-gradient(#a0a0a0, #a0a0a0) 3px 16px / 8px 2px no-repeat,
    linear-gradient(#a0a0a0, #a0a0a0) 3px 26px / 8px 2px no-repeat,
    linear-gradient(#a0a0a0, #a0a0a0) 3px 74px / 8px 2px no-repeat,
    linear-gradient(#a0a0a0, #a0a0a0) 3px 95px / 8px 2px no-repeat;
  &::-webkit-slider-runnable-track {
    width: 6px;
    background: #ffffff26;
    border: 1px solid #ffffff22;
    border-radius: 3px;
  }
  &::-webkit-slider-thumb {
    appearance: none;
    width: 14px;
    height: 30px;
    margin-left: -5px;
    background: linear-gradient(#eee 2px, #999 2px 3px, #c6c6c6 3px 14px, #777 14px 15px, #ddd 15px 26px, #999 26px 27px, #bbb 27px);
    border-radius: 1px;
  }
`;

const MixerTabs = styled.div`
  display: flex;
  height: 26px;
  > div { width: 234px; }
`;

const TabScroll = styled.button`
  width: 15px;
  height: 24px;
  display: flex;
  align-items: center;
  justify-content: center;
  &:disabled { color: #5a5d60; }
`;

const Status = styled.footer`
  height: 32px;
  display: flex;
  align-items: center;
  justify-content: flex-end;
  padding-right: 20px;
  border-top: 1px solid #4d5053;
`;

const Mode = styled.span`
  padding-right: 5px;
`;

const StatusSep = styled(Sep)`
  height: 26px;
`;

const SplitButton = styled.div`
  display: flex;
  width: 46px;
  height: 26px;
  margin: 0 1px;
  background: #3a3d40;
  border: 1px solid #55585b;
  border-radius: 5px;
  button {
    flex: 1 1 26px;
    display: flex;
    align-items: center;
    justify-content: center;
  }
  button + button {
    flex-basis: 17px;
    border-left: 1px solid #55585b;
  }
`;

const Zoom = styled.input`
  width: 100px;
  height: 18px;
  appearance: none;
  &::-webkit-slider-runnable-track {
    height: 6px;
    border-radius: 3px;
    background: linear-gradient(90deg, #4b4e50 58%, #3787b0 58%);
  }
  &::-webkit-slider-thumb {
    appearance: none;
    width: 18px;
    height: 18px;
    margin-top: -6px;
    background: #2b2e32;
    border: 1px solid #65686b;
    border-radius: 50%;
  }
`;
